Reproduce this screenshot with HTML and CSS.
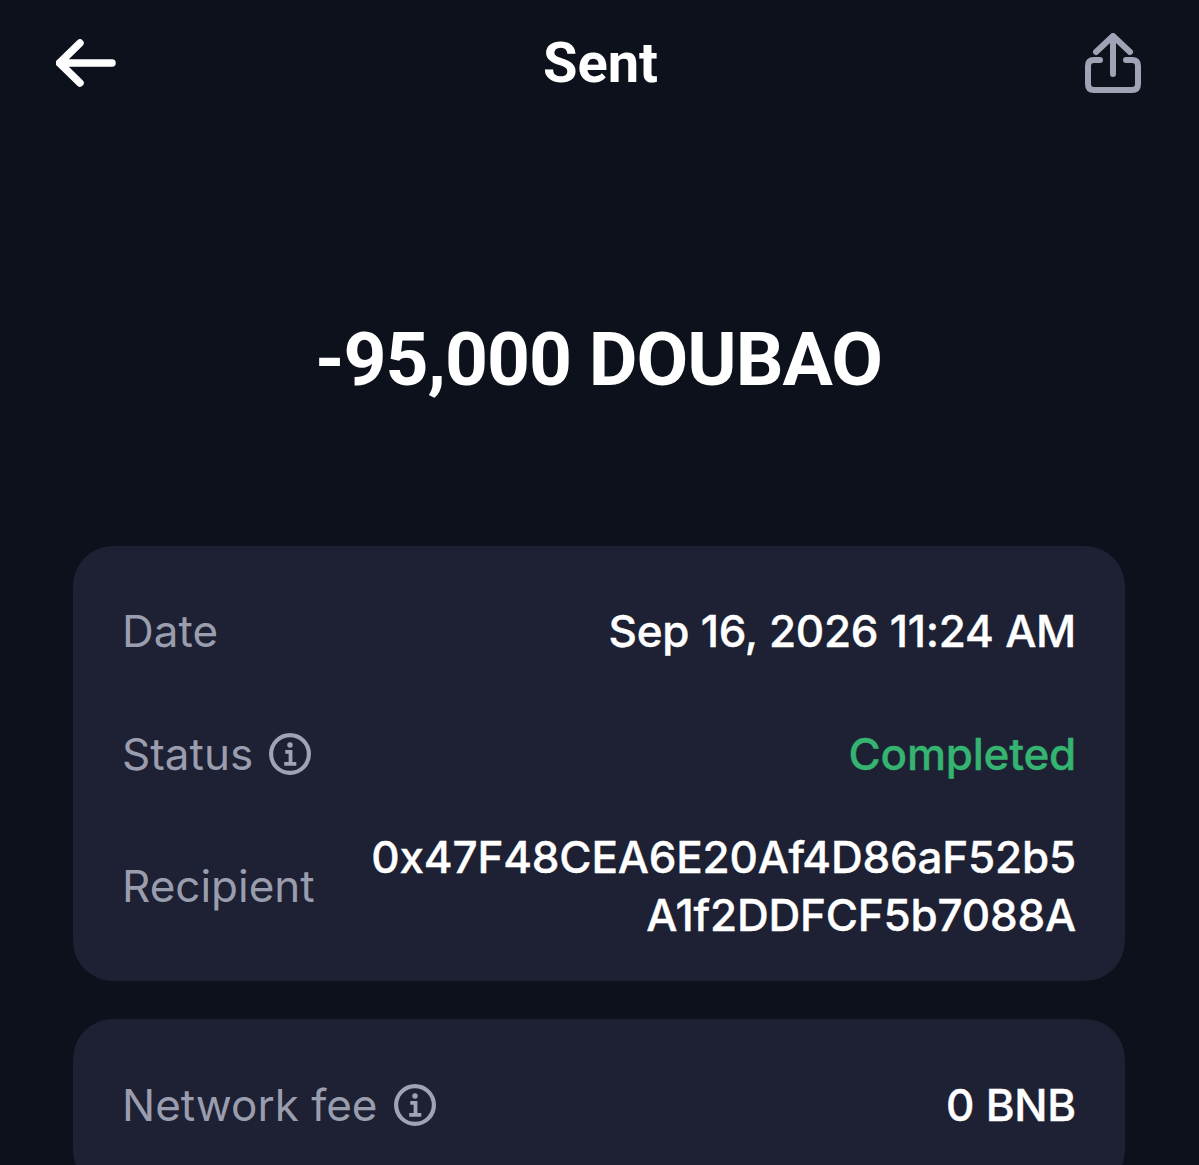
FILE: index.html
```html
<!DOCTYPE html>
<html lang="en">
<head>
  <meta charset="UTF-8" />
  <title>Sent</title>
  <link rel="stylesheet" href="styles.css">
</head>
<body>
  <div class="screen">
    <header class="topbar">
      <svg class="icon-back" viewBox="0 0 60 50" fill="none" stroke="#fff" stroke-width="7.5" stroke-linecap="round" stroke-linejoin="round">
        <path d="M3.5 25H56M24 5L3.5 25L24 45"/>
      </svg>
      <div class="title">Sent</div>
      <svg class="icon-share" viewBox="0 0 56 60" fill="none" stroke="#a0a3b5" stroke-width="6" stroke-linecap="round" stroke-linejoin="round">
        <path d="M28 41V4M11 19L28 3L45 19"/>
        <path d="M15 27H9Q3 27 3 33V51Q3 57 9 57H47Q53 57 53 51V33Q53 27 47 27H41"/>
      </svg>
    </header>

    <div class="amount">-95,000 DOUBAO</div>

    <section class="card card-main">
      <div class="row">
        <div class="label">Date</div>
        <div class="value">Sep 16, 2026 11:24 AM</div>
      </div>
      <div class="row">
        <div class="label">Status
          <svg class="icon-info" viewBox="0 0 40 40" fill="none" stroke="#a0a3b5">
            <circle cx="20" cy="20" r="18" stroke-width="4"/>
            <circle cx="20" cy="11.5" r="2.6" fill="#a0a3b5" stroke="none"/>
            <path d="M15.5 18H20.5V29M14.5 29.5H26" stroke-width="3.6"/>
          </svg>
        </div>
        <div class="value completed">Completed</div>
      </div>
      <div class="row">
        <div class="label">Recipient</div>
        <div class="value address">0x47F48CEA6E20Af4D86aF52b5<br>A1f2DDFCF5b7088A</div>
      </div>
    </section>

    <section class="card">
      <div class="row">
        <div class="label">Network fee
          <svg class="icon-info" viewBox="0 0 40 40" fill="none" stroke="#a0a3b5">
            <circle cx="20" cy="20" r="18" stroke-width="4"/>
            <circle cx="20" cy="11.5" r="2.6" fill="#a0a3b5" stroke="none"/>
            <path d="M15.5 18H20.5V29M14.5 29.5H26" stroke-width="3.6"/>
          </svg>
        </div>
        <div class="value">0 BNB</div>
      </div>
    </section>
  </div>
</body>
</html>
```

FILE: styles.css
```css
* { margin: 0; padding: 0; box-sizing: border-box; }
html, body { height: 100%; overflow: hidden; }
body { background: #0d111c; font-family: "Inter", "Liberation Sans", sans-serif; color: #fff; }

.screen {
  height: 1165px;
  overflow: hidden;
  padding: 32px 58px 0 56px;
}

.topbar {
  display: flex;
  justify-content: space-between;
  align-items: center;
  height: 62px;
}

.icon-back { width: 60px; height: 50px; }
.icon-share { width: 56px; height: 60px; }

.title {
  font-family: "Roboto", "Liberation Sans", sans-serif;
  font-size: 56px;
  font-weight: 700;
}

.amount {
  margin-top: 221px;
  text-align: center;
  font-family: "Roboto", "Liberation Sans", sans-serif;
  font-size: 75px;
  line-height: 88px;
  font-weight: 700;
  letter-spacing: -1px;
}

.card {
  margin: 0 16px 38px 17px;
  padding: 24px 49px;
  background: #1d2133;
  border-radius: 40px;
}

.card-main { margin-top: 143px; height: 435px; }

.row {
  display: flex;
  justify-content: space-between;
  align-items: center;
  min-height: 123px;
}

.card-main .row { min-height: 0; height: 122px; }
.card-main .row:nth-child(2) { height: 124px; }
.card-main .row:last-child { height: 140px; }

.label {
  display: flex;
  align-items: center;
  gap: 16px;
  font-size: 44px;
  color: #9a9dae;
}

.icon-info { width: 42px; height: 42px; }

.value {
  text-align: right;
  font-size: 44px;
  font-weight: 500;
  letter-spacing: -0.25px;
  -webkit-text-stroke: 0.4px currentColor;
}

.completed { color: #35b370; }
.address { line-height: 58px; letter-spacing: -0.2px; }
```
